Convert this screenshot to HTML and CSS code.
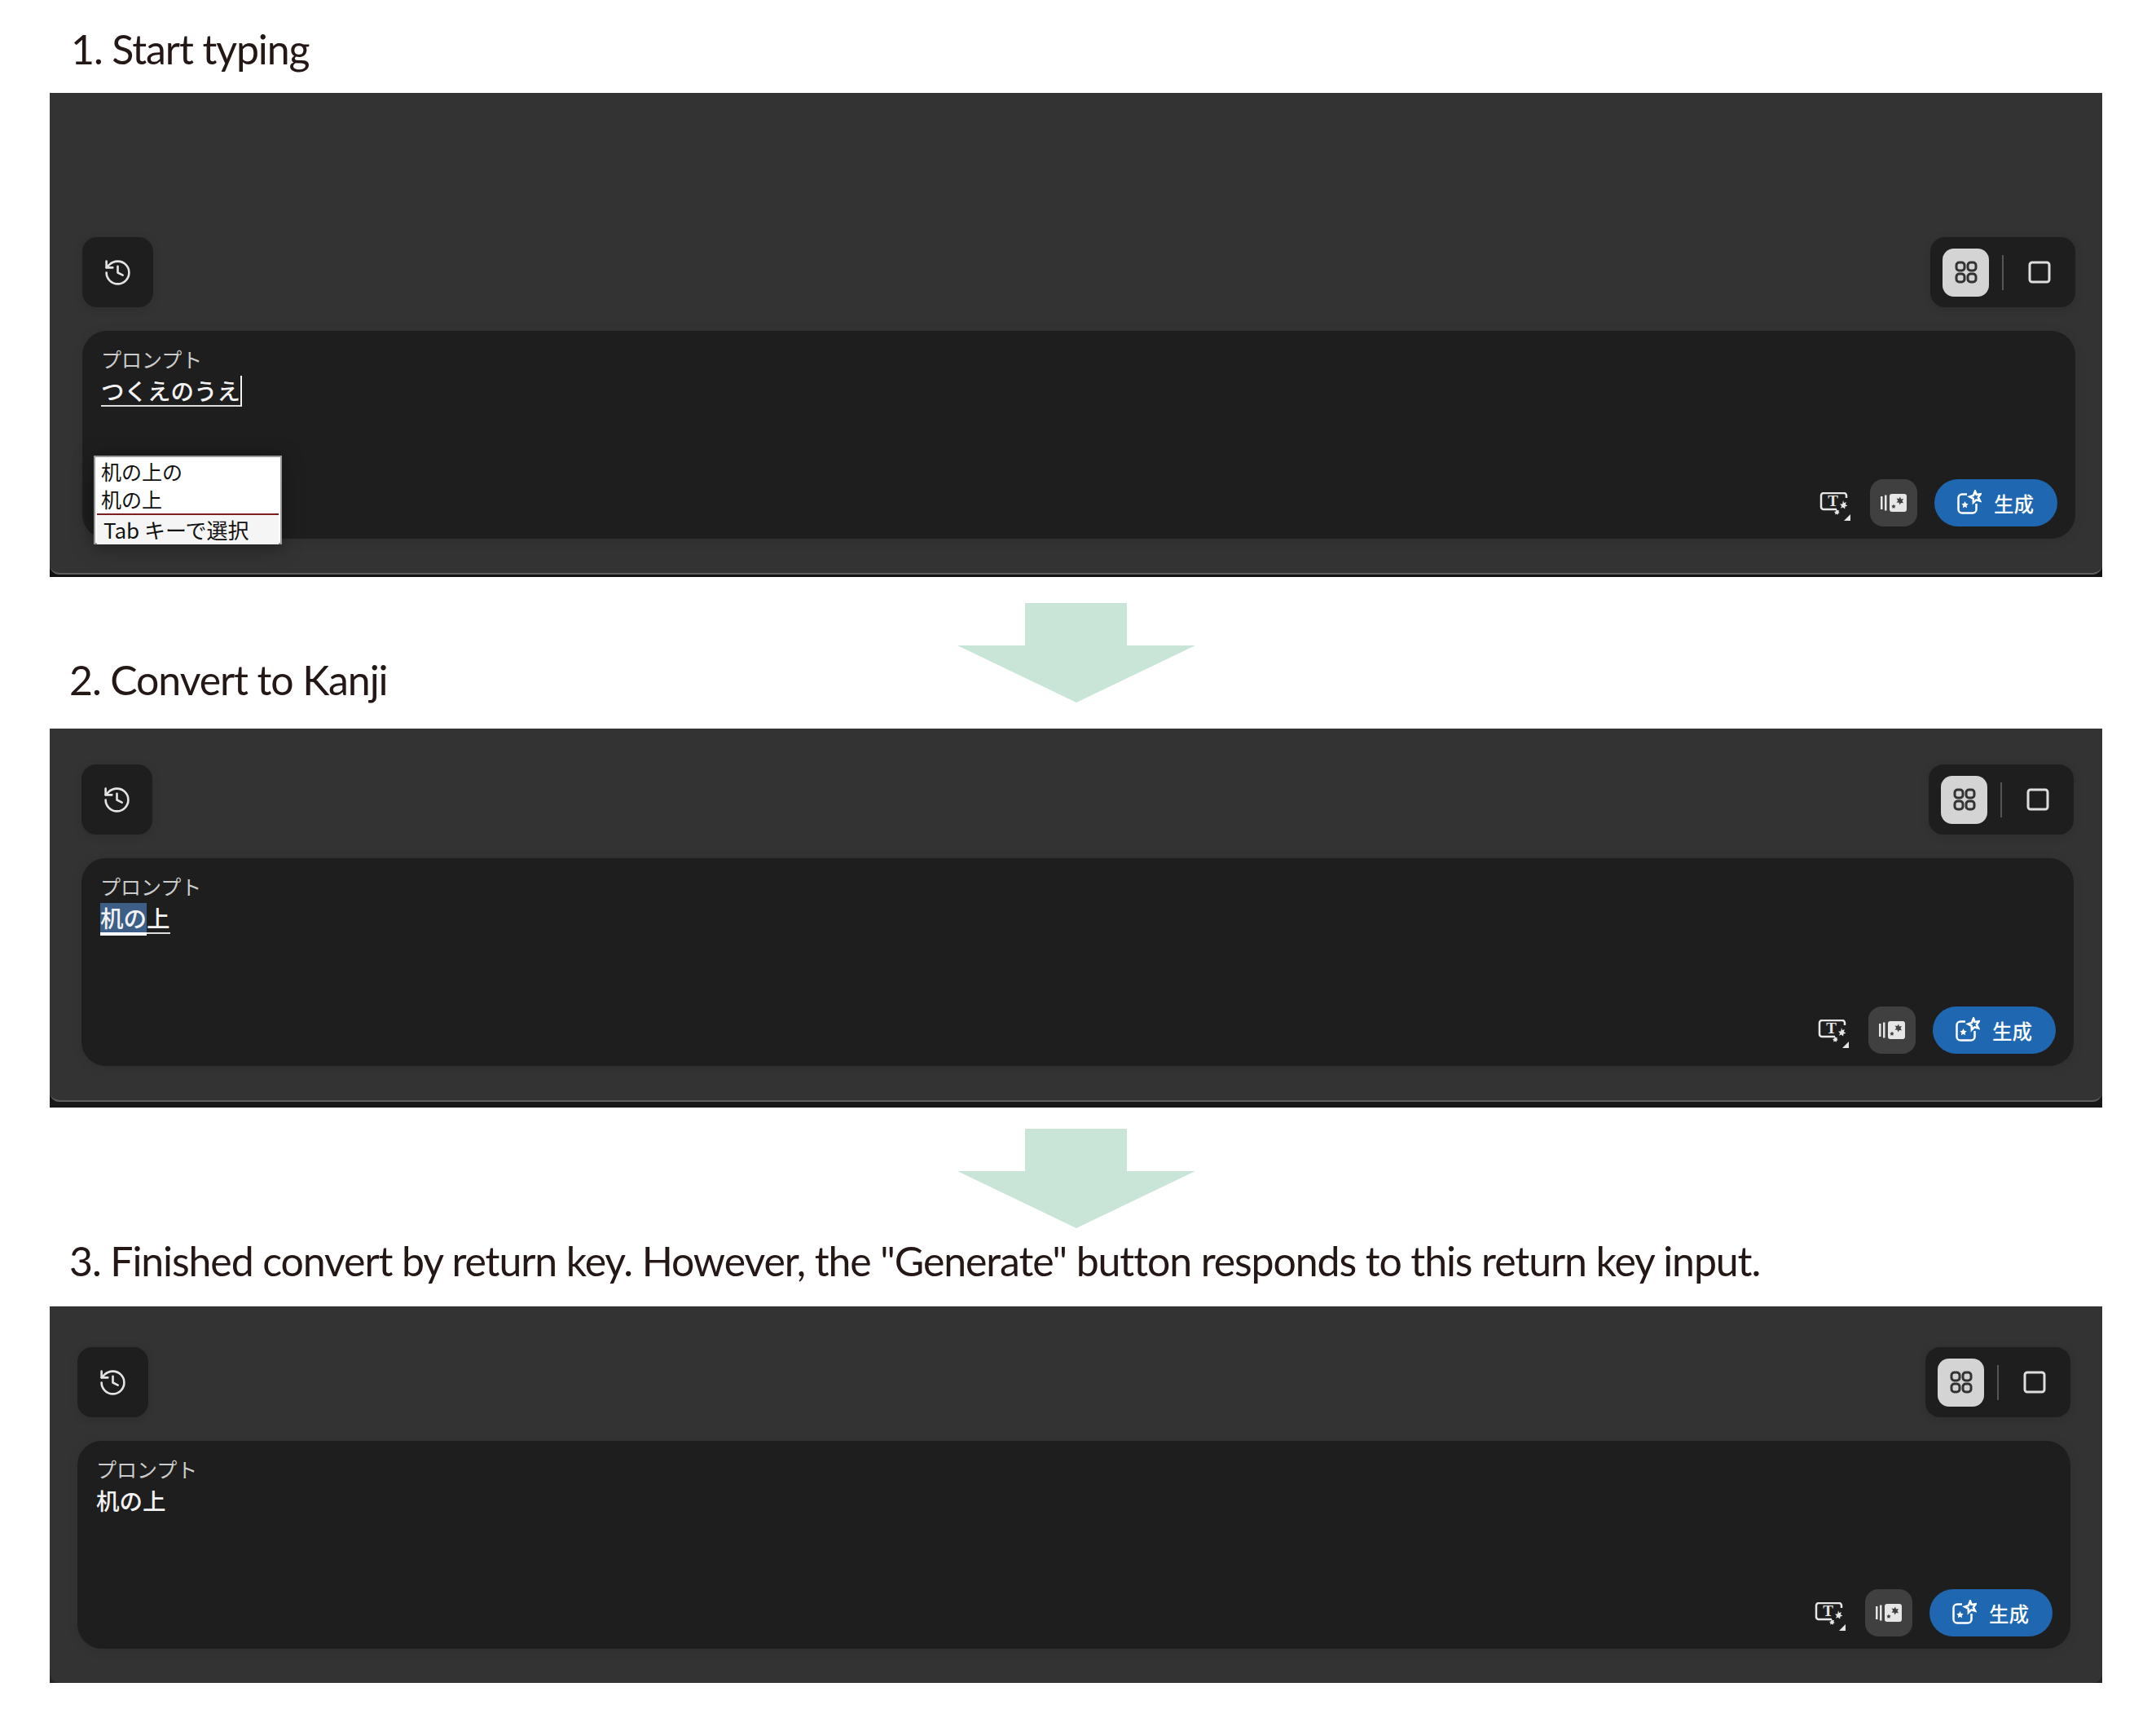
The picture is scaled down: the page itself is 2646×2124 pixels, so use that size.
FILE: index.html
```html
<!DOCTYPE html>
<html lang="ja">
<head>
    <meta charset="UTF-8">
    <title>Kanji conversion steps</title>
    <link rel="stylesheet" href="styles.css">
</head>
<body>
    <svg class="sprite" xmlns="http://www.w3.org/2000/svg">
        <symbol id="i-history" viewBox="0 0 24 24">
            <path d="M3 12a9 9 0 1 0 9-9 9.75 9.75 0 0 0-6.74 2.74L3 8"/>
            <path d="M3 3v5h5"/>
            <path d="M12 7v5l4 2"/>
        </symbol>
        <symbol id="i-grid" viewBox="0 0 28 28">
            <rect x="2" y="2" width="10" height="10" rx="3.5"/>
            <rect x="16" y="2" width="10" height="10" rx="3.5"/>
            <rect x="2" y="16" width="10" height="10" rx="3.5"/>
            <rect x="16" y="16" width="10" height="10" rx="3.5"/>
        </symbol>
        <symbol id="i-single" viewBox="0 0 28 28">
            <rect x="2" y="2" width="24" height="24" rx="3"/>
        </symbol>
        <symbol id="i-prompt" viewBox="0 0 40 36">
            <path class="g-line" d="M21 21H5a3 3 0 0 1-3-3V4a3 3 0 0 1 3-3h25a3 3 0 0 1 3 3v3"/>
            <text class="g-letter" x="16.500" y="17" text-anchor="middle">T</text>
            <path class="g-fill" d="M29 10l1 3 3-.8-1.200 2.900 2.700 1.600-3 .7-.4 3.100-2.300-2.100-2.800 1.300 1.200-2.800-2.100-2.300 3.100-.2z"/>
            <path class="g-fill" d="M21 20.500l1 1.700 2-.2-.6 1.900 1.500 1.300-1.900.6-.4 2-1.600-1.300-1.800.9.300-2-1.500-1.400 2-.5z"/>
            <path class="g-fill" d="M38 27v8h-8z"/>
        </symbol>
        <symbol id="i-dice" viewBox="0 0 32 22">
            <path class="g-fill" d="M0 3h2.500v16H0zM5 1.500h2.500v19H5zM14 0h15a3 3 0 0 1 3 3v16a3 3 0 0 1-3 3H14a3 3 0 0 1-3-3V3a3 3 0 0 1 3-3z"/>
            <path class="g-cut" d="M24 3.500l1 3 3-.5-1.500 2.700 1.500 2.500-3-.3-1.500 2.600-1-2.900-3 .2 1.800-2.500-1.800-2.700 3 .5z"/>
            <path class="g-cut" d="M16 12.500l.8 1.700 1.800.3-1.300 1.400.3 1.900-1.600-.9-1.700.9.300-1.900-1.300-1.400 1.900-.3z"/>
        </symbol>
        <symbol id="i-generate" viewBox="0 0 30 30">
            <path class="g-line" d="M12 5.500H6a4.500 4.500 0 0 0-4.500 4.500v14A4.500 4.500 0 0 0 6 28.500h13a4.500 4.500 0 0 0 4.500-4.500v-7"/>
            <path class="g-line" d="M22 1.500l1.600 4.400 5-.6-2.800 4 2.200 4.300-4.700-1.300-3.500 3.300-.1-4.800-4.400-2.300 4.600-1.500z"/>
            <path class="g-fill" d="M9.500 14l1.300 2.700 2.900.5-2.100 2.100.4 2.900-2.500-1.400-2.600 1.400.5-2.900-2.100-2.100 2.900-.5z"/>
        </symbol>
        <symbol id="i-arrow" viewBox="0 0 292 122">
            <polygon points="83,0 208,0 208,52 292,52 146,122 0,52 83,52"/>
        </symbol>
    </svg>

    <!-- Step 1 -->
    <div class="step-head head-1">
        <h2 class="step-title">1. Start typing</h2>
    </div>
    <section class="panel panel-1">
        <div class="panel-inner">
            <div class="toolbar">
                <button class="tool-btn"><svg class="icon-history"><use href="#i-history"/></svg></button>
                <div class="view-switch">
                    <span class="view-btn active"><svg class="icon-view"><use href="#i-grid"/></svg></span>
                    <span class="view-divider"></span>
                    <span class="view-btn"><svg class="icon-view"><use href="#i-single"/></svg></span>
                </div>
            </div>
            <div class="prompt-box">
                <div class="prompt-label">プロンプト</div>
                <div class="prompt-input"><span class="composing caret">つくえのうえ</span></div>
                <div class="candidates">
                    <div class="candidate">机の上の</div>
                    <div class="candidate">机の上</div>
                    <div class="candidate-hint">Tab キーで選択</div>
                </div>
                <div class="prompt-actions">
                    <svg class="icon-prompt"><use href="#i-prompt"/></svg>
                    <span class="dice-btn"><svg class="icon-dice"><use href="#i-dice"/></svg></span>
                    <button class="generate-btn"><svg class="icon-generate"><use href="#i-generate"/></svg>生成</button>
                </div>
            </div>
        </div>
    </section>

    <!-- Step 2 -->
    <div class="step-head head-2">
        <h2 class="step-title">2. Convert to Kanji</h2>
        <svg class="arrow"><use href="#i-arrow"/></svg>
    </div>
    <section class="panel panel-2">
        <div class="panel-inner">
            <div class="toolbar">
                <button class="tool-btn"><svg class="icon-history"><use href="#i-history"/></svg></button>
                <div class="view-switch">
                    <span class="view-btn active"><svg class="icon-view"><use href="#i-grid"/></svg></span>
                    <span class="view-divider"></span>
                    <span class="view-btn"><svg class="icon-view"><use href="#i-single"/></svg></span>
                </div>
            </div>
            <div class="prompt-box">
                <div class="prompt-label">プロンプト</div>
                <div class="prompt-input"><span class="composing selected">机の</span><span class="composing">上</span></div>
                <div class="prompt-actions">
                    <svg class="icon-prompt"><use href="#i-prompt"/></svg>
                    <span class="dice-btn"><svg class="icon-dice"><use href="#i-dice"/></svg></span>
                    <button class="generate-btn"><svg class="icon-generate"><use href="#i-generate"/></svg>生成</button>
                </div>
            </div>
        </div>
    </section>

    <!-- Step 3 -->
    <div class="step-head head-3">
        <h2 class="step-title">3. Finished convert by return key. However, the "Generate" button responds to this return key input.</h2>
        <svg class="arrow"><use href="#i-arrow"/></svg>
    </div>
    <section class="panel panel-3">
        <div class="panel-inner">
            <div class="toolbar">
                <button class="tool-btn"><svg class="icon-history"><use href="#i-history"/></svg></button>
                <div class="view-switch">
                    <span class="view-btn active"><svg class="icon-view"><use href="#i-grid"/></svg></span>
                    <span class="view-divider"></span>
                    <span class="view-btn"><svg class="icon-view"><use href="#i-single"/></svg></span>
                </div>
            </div>
            <div class="prompt-box">
                <div class="prompt-label">プロンプト</div>
                <div class="prompt-input"><span class="plain">机の上</span></div>
                <div class="prompt-actions">
                    <svg class="icon-prompt"><use href="#i-prompt"/></svg>
                    <span class="dice-btn"><svg class="icon-dice"><use href="#i-dice"/></svg></span>
                    <button class="generate-btn"><svg class="icon-generate"><use href="#i-generate"/></svg>生成</button>
                </div>
            </div>
        </div>
    </section>
</body>
</html>
```
FILE: styles.css
```css
body {
    margin: 0;
    height: 2124px;
    background: #fff;
    font-family: "Noto Sans CJK JP", "Noto Sans", sans-serif;
}

.sprite {
    display: none;
}

/* Step headings with the arrow sharing the same row */
.step-head {
    display: grid;
    align-items: end;
    padding: 0 66px 0 85px;
}

.head-1 { height: 114px; }
.head-2 { height: 186px; }
.head-3 { height: 244px; }

.step-title {
    grid-area: 1 / 1;
    margin: 0;
    font-family: Lato, sans-serif;
    font-size: 50px;
    font-weight: 400;
    line-height: 60px;
    letter-spacing: -1.1px;
    color: #231815;
    white-space: nowrap;
}

.head-1 .step-title { padding: 0 0 24px 2px; }
.head-2 .step-title { padding-bottom: 30px; }
.head-3 .step-title { padding-bottom: 26px; }

.arrow {
    grid-area: 1 / 1;
    align-self: start;
    width: 292px;
    height: 122px;
    margin-left: 1090px;
    fill: #c9e5d7;
}

.head-2 .arrow { margin-top: 32px; }
.head-3 .arrow { margin-top: 26px; }

/* Panels */
.panel {
    margin-left: 61px;
    width: 2519px;
    background: #111;
}

.panel-inner {
    background: #333;
    border-bottom: 2px solid #5f5f5f;
    border-radius: 0 0 12px 12px;
}

.panel-1 { padding-bottom: 3px; }
.panel-1 .panel-inner { padding: 177px 33px 42px 40px; }

.panel-2 { padding-bottom: 7px; background: #181818; }
.panel-2 .panel-inner { padding: 44px 35px 42px 39px; }

.panel-3 { background: #262626; }
.panel-3 .panel-inner { padding: 50px 39px 42px 34px; border-bottom: 0; }

.toolbar {
    display: flex;
    justify-content: space-between;
    margin-bottom: 29px;
}

.tool-btn {
    display: flex;
    justify-content: center;
    align-items: center;
    width: 87px;
    height: 86px;
    padding: 0;
    border: none;
    border-radius: 18px;
    background: #1e1e1e;
    box-shadow: 0 2px 12px rgba(0, 0, 0, 0.12);
}

.icon-history {
    width: 37px;
    height: 37px;
    fill: none;
    stroke: #e4e4e4;
    stroke-width: 1.7;
    stroke-linecap: round;
    stroke-linejoin: round;
}

.view-switch {
    display: flex;
    align-items: center;
    box-sizing: border-box;
    width: 178px;
    height: 86px;
    padding-left: 15px;
    border-radius: 18px;
    background: #1e1e1e;
    box-shadow: 0 2px 12px rgba(0, 0, 0, 0.12);
}

.view-btn {
    display: flex;
    justify-content: center;
    align-items: center;
    width: 57px;
    height: 59px;
    border-radius: 14px;
    color: #ddd;
}

.view-btn.active {
    background: #d4d4d4;
    color: #333;
}

.view-divider {
    width: 2px;
    height: 43px;
    margin: 0 15px 0 16px;
    background: #555;
}

.icon-view {
    width: 28px;
    height: 28px;
    fill: none;
    stroke: currentColor;
    stroke-width: 3;
}

/* Prompt box */
.prompt-box {
    position: relative;
    display: flex;
    flex-direction: column;
    box-sizing: border-box;
    height: 255px;
    padding: 17px 22px 15px 23px;
    border-radius: 30px;
    background: #1e1e1e;
    box-shadow: 0 2px 14px rgba(0, 0, 0, 0.1);
}

.prompt-label {
    font-size: 25px;
    line-height: 34px;
    color: #ccc;
}

.prompt-input {
    height: 40px;
    margin-top: 4px;
    font-size: 28.5px;
    font-weight: 500;
    line-height: 36px;
    color: #f2f2f2;
}

.composing {
    display: inline-block;
    border-bottom: 2px solid #ddd;
}

.composing.caret {
    border-right: 2px solid #f2f2f2;
}

.composing.selected {
    background: #3d5f87;
    border-bottom: 4px solid #fff;
}

/* IME candidate window */
.candidates {
    position: absolute;
    left: 14px;
    top: 153px;
    z-index: 1;
    box-sizing: border-box;
    width: 231px;
    height: 109px;
    padding: 0 2px;
    border: 2px solid #9a9a9a;
    background: #fff;
    box-shadow: 0 4px 24px rgba(0, 0, 0, 0.35);
    color: #111;
}

.candidate {
    height: 34px;
    padding-left: 5px;
    font-size: 25px;
    line-height: 34px;
}

.candidate-hint {
    height: 36px;
    margin-top: 1px;
    padding-left: 8px;
    border-top: 2px solid #7a2020;
    background: #f5f5f5;
    font-size: 26px;
    line-height: 35px;
    white-space: nowrap;
}

.prompt-actions {
    display: flex;
    justify-content: flex-end;
    align-items: center;
    margin-top: auto;
}

.icon-prompt {
    width: 40px;
    height: 36px;
    margin: 10px 22px 0 0;
    color: #e6e6e6;
}

.g-line {
    fill: none;
    stroke: currentColor;
    stroke-width: 2.5;
}

.g-fill {
    fill: currentColor;
}

.g-cut {
    fill: #404040;
}

.g-letter {
    font-family: "Liberation Serif", serif;
    font-size: 19px;
    font-weight: 700;
    fill: currentColor;
}

.dice-btn {
    display: flex;
    justify-content: center;
    align-items: center;
    width: 58px;
    height: 58px;
    margin-right: 21px;
    border-radius: 16px;
    background: #404040;
}

.icon-dice {
    width: 32px;
    height: 22px;
    color: #e6e6e6;
}

.generate-btn {
    display: flex;
    align-items: center;
    gap: 15px;
    box-sizing: border-box;
    width: 151px;
    height: 58px;
    padding: 0 0 0 28px;
    border: none;
    border-radius: 29px;
    background: #2067b2;
    font-family: "Noto Sans CJK JP", sans-serif;
    font-size: 24.5px;
    font-weight: 500;
    color: #fff;
}

.icon-generate {
    width: 30px;
    height: 30px;
    flex: none;
    margin-top: -2px;
    color: #fff;
}
```
